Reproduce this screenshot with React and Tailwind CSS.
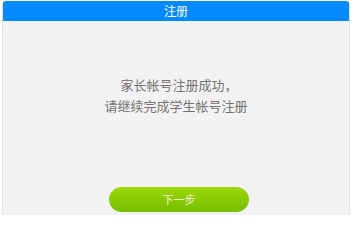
export default function App() {
  const font = { fontFamily: '"Noto Sans CJK SC", "Liberation Sans", sans-serif' }

  return (
    <div className="w-[353px] h-[215px] bg-white overflow-hidden pt-[1px] px-[2px]" style={font}>
      <div className="w-[348px] h-[230px] bg-[#f2f2f2] border-x border-[#e2e2e2] rounded-t-[3px] flex flex-col">
        {/* Header */}
        <div className="h-[20px] bg-[#0689fd] rounded-t-[3px] flex items-center justify-center text-white text-[12px] leading-none">
          注册
        </div>

        {/* Message */}
        <div className="pt-[53px] flex flex-col items-center text-[13px] leading-[21px] text-[#737373]">
          <p className="ml-[6px]">家长帐号注册成功，</p>
          <p>请继续完成学生帐号注册</p>
        </div>

        {/* Button */}
        <div className="mt-[71px] flex justify-center">
          <button className="ml-[6px] w-[140px] h-[25px] rounded-full bg-gradient-to-b from-[#9dd80a] to-[#76bd00] text-[#eef8d8] text-[11px] leading-none">
            下一步
          </button>
        </div>
      </div>
    </div>
  )
}
